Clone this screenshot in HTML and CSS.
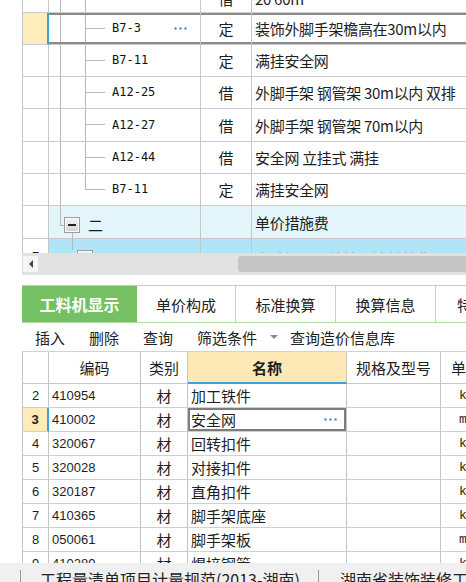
FILE: index.html
```html
<!DOCTYPE html>
<html lang="zh">
<head>
<meta charset="utf-8">
<title>工料机显示</title>
<link rel="stylesheet" href="styles.css">
</head>
<body>
<div class="app">
  <div class="main">
    <div class="gutter"></div>
    <div class="content">
      <div class="tgrid">
        <div class="trow partial">
          <div class="rn"></div><div class="tree"></div><div class="ty bot">借</div><div class="nm bot">20 60m</div>
        </div>
        <div class="trow sel">
          <div class="rn"></div>
          <div class="tree"><span class="code">B7-3</span><svg class="dots" width="13" height="3" viewBox="0 0 13 3"><circle cx="1.5" cy="1.5" r="1.2"/><circle cx="6.5" cy="1.5" r="1.2"/><circle cx="11.5" cy="1.5" r="1.2"/></svg></div>
          <div class="ty">定</div><div class="nm">装饰外脚手架檐高在30m以内</div>
        </div>
        <div class="trow">
          <div class="rn"></div><div class="tree"><span class="code">B7-11</span></div><div class="ty">定</div><div class="nm">满挂安全网</div>
        </div>
        <div class="trow">
          <div class="rn"></div><div class="tree"><span class="code">A12-25</span></div><div class="ty">借</div><div class="nm">外脚手架 钢管架 30m以内 双排</div>
        </div>
        <div class="trow h33">
          <div class="rn"></div><div class="tree"><span class="code">A12-27</span></div><div class="ty">借</div><div class="nm">外脚手架 钢管架 70m以内</div>
        </div>
        <div class="trow">
          <div class="rn"></div><div class="tree"><span class="code">A12-44</span></div><div class="ty">借</div><div class="nm">安全网 立挂式 满挂</div>
        </div>
        <div class="trow">
          <div class="rn"></div><div class="tree last"><span class="code">B7-11</span></div><div class="ty">定</div><div class="nm">满挂安全网</div>
        </div>
        <div class="trow h33 grp">
          <div class="rn"></div>
          <div class="tree group"><span class="box"></span><span class="gname">二</span></div>
          <div class="ty"></div><div class="nm">单价措施费</div>
        </div>
        <div class="trow sub">
          <div class="rn num">7</div>
          <div class="tree subtree"><span class="box"></span></div>
          <div class="ty"></div><div class="nm hint">自动提示：请输入清单简称</div>
        </div>
      </div>

      <div class="hscroll">
        <span class="sbtn"><span class="tri"></span></span>
        <span class="thumb"></span>
      </div>
      <div class="spacer"></div>

      <div class="tabs">
        <div class="tab active">工料机显示</div>
        <div class="tab">单价构成</div>
        <div class="tab">标准换算</div>
        <div class="tab">换算信息</div>
        <div class="tab lasttab">特征及内容</div>
      </div>

      <div class="toolbar">
        <span class="tb">插入</span>
        <span class="tb">删除</span>
        <span class="tb">查询</span>
        <span class="tb drop">筛选条件<span class="caret"></span></span>
        <span class="tb">查询造价信息库</span>
      </div>

      <div class="lgrid">
        <div class="lrow hd">
          <div class="rn"></div><div class="cd">编码</div><div class="cat">类别</div><div class="lnm">名称</div><div class="spec">规格及型号</div><div class="unit">单位</div>
        </div>
        <div class="lrow"><div class="rn">2</div><div class="cd">410954</div><div class="cat">材</div><div class="lnm">加工铁件</div><div class="spec"></div><div class="unit">kg</div></div>
        <div class="lrow cur"><div class="rn">3</div><div class="cd">410002</div><div class="cat">材</div><div class="lnm"><span>安全网</span><svg class="dots" width="13" height="3" viewBox="0 0 13 3"><circle cx="1.5" cy="1.5" r="1.2"/><circle cx="6.5" cy="1.5" r="1.2"/><circle cx="11.5" cy="1.5" r="1.2"/></svg></div><div class="spec"></div><div class="unit">m2</div></div>
        <div class="lrow"><div class="rn">4</div><div class="cd">320067</div><div class="cat">材</div><div class="lnm">回转扣件</div><div class="spec"></div><div class="unit">kg</div></div>
        <div class="lrow"><div class="rn">5</div><div class="cd">320028</div><div class="cat">材</div><div class="lnm">对接扣件</div><div class="spec"></div><div class="unit">kg</div></div>
        <div class="lrow"><div class="rn">6</div><div class="cd">320187</div><div class="cat">材</div><div class="lnm">直角扣件</div><div class="spec"></div><div class="unit">kg</div></div>
        <div class="lrow"><div class="rn">7</div><div class="cd">410365</div><div class="cat">材</div><div class="lnm">脚手架底座</div><div class="spec"></div><div class="unit">kg</div></div>
        <div class="lrow"><div class="rn">8</div><div class="cd">050061</div><div class="cat">材</div><div class="lnm">脚手架板</div><div class="spec"></div><div class="unit">m3</div></div>
        <div class="lrow"><div class="rn">9</div><div class="cd">410289</div><div class="cat">材</div><div class="lnm">焊接钢管</div><div class="spec"></div><div class="unit">kg</div></div>
      </div>
    </div>
  </div>
  <div class="status">
    <span class="sitem first">工程量清单项目计量规范(2013-湖南)</span>
    <span class="sitem">湖南省装饰装修工程消耗量标准</span>
  </div>
</div>
</body>
</html>
```

FILE: styles.css
```css
html, body {
  margin: 0;
  padding: 0;
  overflow: hidden;
  background: #fff;
}
body {
  font-family: "Noto Sans CJK SC", "Liberation Sans", sans-serif;
  color: #1e1e1e;
}
.app {
  width: 466px;
  height: 582px;
  overflow: hidden;
  display: flex;
  flex-direction: column;
}
.main {
  display: flex;
  height: 563px;
  flex: none;
}
.gutter {
  width: 22px;
  flex: none;
  background: #fff;
}
.content {
  flex: 1;
  min-width: 0;
  display: flex;
  flex-direction: column;
  overflow: hidden;
}

/* ---------- top grid ---------- */
.tgrid {
  height: 253px;
  overflow: hidden;
  flex: none;
}
.trow {
  display: grid;
  grid-template-columns: 27px 152px 51px 1fr;
  height: 32px;
}
.trow.h33 { height: 33px; }
.trow.partial { margin-top: -19px; }
.trow > div {
  box-sizing: border-box;
  border-right: 1px solid #c6c6c6;
  border-bottom: 1px solid #cbcbcb;
  display: flex;
  align-items: center;
  white-space: nowrap;
  overflow: hidden;
  font-size: 15px;
  line-height: 17px;
}
.trow > .rn { border-left: 1px solid #c6c6c6; justify-content: center; }
.trow > .nm { border-right: none; padding-left: 3px; letter-spacing: -0.3px; }
.trow > .ty { justify-content: center; }
.trow > .bot { align-items: flex-end; padding-bottom: 5px; }

.tree {
  padding-left: 63px;
  padding-right: 13px;
  justify-content: space-between;
  background-image:
    linear-gradient(#b8b8b8, #b8b8b8),
    linear-gradient(#b8b8b8, #b8b8b8),
    linear-gradient(#b8b8b8, #b8b8b8);
  background-repeat: no-repeat;
  background-size: 1px 100%, 1px 100%, 20px 1px;
  background-position: 11px 0, 36px 0, 36px 15px;
}
.tree.last {
  background-size: 1px 100%, 1px 16px, 20px 1px;
}
.code {
  font-family: "DejaVu Sans Mono", "Liberation Mono", monospace;
  font-size: 12px;
  color: #111;
}
.dots { fill: #3d92d8; flex: none; }

.trow.sel > .rn {
  background: #fdedbb;
  border-right: 2px solid #3aa3dc;
}
.trow.sel > div:not(.rn) {
  box-shadow: inset 0 2px 0 #8a8a8a, inset 0 -2px 0 #8a8a8a;
}

.box {
  width: 16px;
  height: 16px;
  box-sizing: border-box;
  border: 1px solid #9c9c9c;
  box-shadow: inset 0 0 0 1px #fafafa;
  background: linear-gradient(#f3f3f3, #d2d2d2);
  display: flex;
  align-items: center;
  justify-content: center;
  flex: none;
}
.box::after {
  content: "";
  width: 8px;
  height: 2px;
  background: #222;
}

.trow.grp > div:not(.rn) { background-color: #e3f5fb; }
.tree.group {
  align-items: flex-start;
  justify-content: flex-start;
  padding: 11px 0 0 15px;
  background-size: 1px 19px, 4px 1px, 1px 100%;
  background-position: 11px 0, 11px 19px, 23px 27px;
}
.gname {
  margin-left: 8px;
  line-height: 16px;
  font-size: 15px;
}

.trow.sub > div:not(.rn) { background-color: #b1e4f7; }
.trow.sub > .rn { font-family: "Liberation Sans", sans-serif; font-size: 13px; padding-top: 4px; }
.tree.subtree {
  align-items: flex-start;
  justify-content: flex-start;
  padding: 11px 0 0 28px;
  background-size: 1px 11px, 0 0, 0 0;
  background-position: 23px 0, 0 0, 0 0;
}
.trow.sub > .hint {
  align-items: flex-start;
  padding-top: 11px;
  color: #8c8c8c;
}

/* ---------- horizontal scrollbar ---------- */
.hscroll {
  height: 22px;
  flex: none;
  background: #e1e1e1;
  display: flex;
  align-items: center;
  overflow: hidden;
}
.sbtn {
  width: 15px;
  height: 16px;
  margin-left: 1px;
  background: #f6f6f6;
  border-radius: 2px;
  display: flex;
  align-items: center;
  justify-content: center;
  flex: none;
}
.tri {
  width: 0;
  height: 0;
  border-top: 4px solid transparent;
  border-bottom: 4px solid transparent;
  border-right: 4px solid #444;
}
.thumb {
  flex: 1;
  height: 16px;
  margin-left: 200px;
  margin-right: -6px;
  background: #c6c6c6;
  border-radius: 3px;
}
.spacer {
  height: 10px;
  flex: none;
}

/* ---------- tabs ---------- */
.tabs {
  height: 38px;
  box-sizing: border-box;
  flex: none;
  display: flex;
  border-top: 1px solid #b4dea6;
  border-bottom: 1px solid #b4dea6;
}
.tab {
  box-sizing: border-box;
  width: 100px;
  flex: none;
  border-right: 1px solid #b4dea6;
  display: flex;
  align-items: center;
  justify-content: center;
  font-size: 15px;
  color: #222;
  white-space: nowrap;
}
.tab.active {
  width: 115px;
  background: #74c062;
  color: #fff;
  font-weight: bold;
  font-size: 16px;
  border-right: none;
}
.tab:nth-child(2) { width: 99px; }
.tab.lasttab { width: 118px; }

/* ---------- toolbar ---------- */
.toolbar {
  height: 29px;
  box-sizing: border-box;
  flex: none;
  display: flex;
  align-items: center;
  gap: 24px;
  padding-left: 13px;
  border-bottom: 1px solid #d2d2d2;
  font-size: 15px;
  color: #222;
  white-space: nowrap;
}
.drop {
  display: flex;
  align-items: center;
}
.caret {
  width: 0;
  height: 0;
  margin-left: 13px;
  border-left: 4px solid transparent;
  border-right: 4px solid transparent;
  border-top: 4px solid #8a8a8a;
}
.toolbar .tb:last-child { margin-left: -12px; }

/* ---------- lower grid ---------- */
.lgrid {
  height: 211px;
  flex: none;
  overflow: hidden;
}
.lrow {
  display: grid;
  grid-template-columns: 27px 92px 47px 159px 94px 1fr;
  height: 24px;
}
.lrow > div {
  box-sizing: border-box;
  border-right: 1px solid #c4c4c4;
  border-bottom: 1px solid #d0d0d0;
  display: flex;
  align-items: center;
  white-space: nowrap;
  overflow: hidden;
  font-size: 15px;
}
.lrow > .rn {
  border-left: 1px solid #c4c4c4;
  justify-content: center;
  font-family: "Liberation Sans", sans-serif;
  font-size: 13px;
}
.lrow > .cd {
  padding-left: 3px;
  font-family: "Liberation Sans", sans-serif;
  font-size: 13px;
}
.lrow > .cat { justify-content: center; }
.lrow > .lnm { padding-left: 3px; }
.lrow > .unit {
  border-right: none;
  padding-left: 18px;
  font-family: "Liberation Mono", monospace;
  font-size: 13px;
}

.lrow.hd { height: 32px; }
.lrow.hd > div {
  justify-content: center;
  font-family: "Noto Sans CJK SC", sans-serif;
  font-size: 15px;
  padding-left: 0;
  border-bottom-color: #c8c8c8;
}
.lrow.hd > .lnm {
  background: #fde9b5;
  font-weight: bold;
  border-bottom: 2px solid #3aa3dc;
}
.lrow.hd > .unit {
  justify-content: flex-start;
  padding-left: 10px;
}

.lrow.cur > .rn {
  background: #fdecb9;
  font-weight: bold;
  border-right: 2px solid #3aa3dc;
}
.lrow.cur > .lnm {
  justify-content: space-between;
  padding-right: 9px;
  box-shadow: inset 0 0 0 2px #7d7d7d;
}

/* ---------- status bar ---------- */
.status {
  height: 30px;
  flex: none;
  box-sizing: border-box;
  background: #f0f0f0;
  display: flex;
  align-items: flex-start;
  padding: 7px 0 0 20px;
  white-space: nowrap;
  font-size: 16px;
  line-height: 18px;
  color: #222;
}
.sitem {
  border-left: 1px solid #9a9a9a;
  padding-left: 21px;
}
.sitem.first {
  width: 298px;
  box-sizing: border-box;
  padding-left: 19px;
  flex: none;
}
```
